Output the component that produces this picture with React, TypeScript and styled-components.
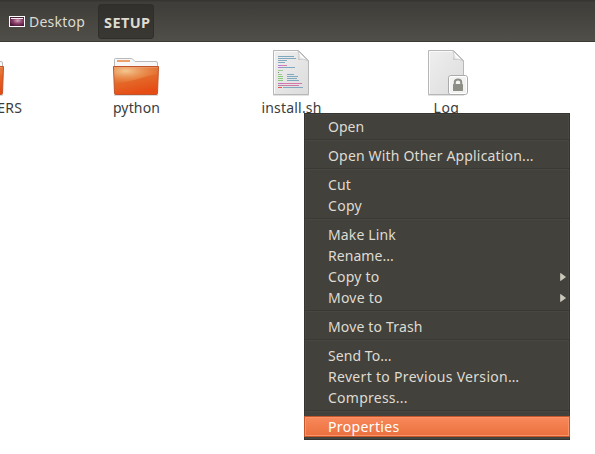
import React from "react";
import styled, { createGlobalStyle, css } from "styled-components";

const GlobalStyle = createGlobalStyle`
  html, body { margin: 0; padding: 0; background: #fff; overflow: hidden; }
  * { box-sizing: border-box; }
`;

const Window = styled.div`
  position: relative;
  width: 595px;
  height: 454px;
  overflow: hidden;
  background: #fff;
  font: 14px/21px "Noto Sans", "Open Sans", sans-serif;
  color: #3c3c3c;
`;

const PathBar = styled.header`
  display: flex;
  align-items: flex-start;
  height: 42px;
  padding: 4px 0 0 9px;
  border-bottom: 1px solid #3b3a36;
  background: linear-gradient(#363531 0, #363531 1px, #3f3e3a 2px, #403f3b 8px, #504f48 41px);
  color: #dfdbd2;
`;

const Crumb = styled.div`
  display: flex;
  align-items: center;
  gap: 4px;
  width: 89px;
  height: 34px;
  letter-spacing: 0.25px;
`;

const ActiveCrumb = styled.div`
  width: 56px;
  height: 35px;
  padding-left: 5px;
  border: 1px solid #2f2e2a;
  border-radius: 3px;
  background: linear-gradient(#31302c, #393833);
  font-size: 14.5px;
  font-weight: 700;
  line-height: 35px;
  letter-spacing: 0.4px;
`;

const Browser = styled.main`
  display: flex;
`;

const Cell = styled.div<{ $width: number; $end?: boolean }>`
  flex: none;
  display: flex;
  flex-direction: column;
  align-items: ${(p) => (p.$end ? "flex-end" : "center")};
  width: ${(p) => p.$width}px;
  padding-top: 6px;
`;

const FolderCrop = styled.div`
  height: 48px;
  margin-right: 17px;

  svg {
    display: block;
  }
`;

const Label = styled.div<{ $spacing?: number }>`
  height: 21px;
  margin-top: 1px;
  padding-left: 1px;
  white-space: nowrap;
  letter-spacing: ${(p) => p.$spacing ?? 0.15}px;
`;

const Menu = styled.nav`
  position: absolute;
  left: 304px;
  top: 113px;
  width: 266px;
  height: 327px;
  padding: 3px 0;
  background: #42413b;
  box-shadow: inset 0 0 0 1px #353430, inset 0 0 0 2px #484741;
  color: #dfdbd2;
`;

const Item = styled.div<{ $spacing: number; $active?: boolean }>`
  display: flex;
  align-items: center;
  justify-content: space-between;
  height: 21px;
  padding: 0 4px 0 24px;
  white-space: nowrap;
  letter-spacing: ${(p) => p.$spacing}px;
  ${(p) =>
    p.$active &&
    css`
      background: linear-gradient(#f98a5d, #ea6f3c);
      box-shadow: inset 0 0 0 1px #c4562b, inset 0 0 0 2px #fa9468;
      color: #fff;
    `}
`;

const Separator = styled.div`
  height: 2px;
  margin: 2px 1px 4px;
  border-top: 1px solid #3a3934;
  border-bottom: 1px solid #484741;
`;

const Arrow = () => (
  <svg width="6" height="8" viewBox="0 0 6 8">
    <path d="M.5.3v7.4L5.6 4z" fill="#c9c8bb" stroke="#e2dfd5" strokeWidth=".5" />
  </svg>
);

const DesktopIcon = () => (
  <svg width="16" height="11" viewBox="0 0 16 11" shapeRendering="crispEdges">
    <defs>
      <radialGradient id="wall" cx=".55" cy=".4" r=".65">
        <stop offset="0" stopColor="#d8a5bb" />
        <stop offset=".5" stopColor="#8b436b" />
        <stop offset="1" stopColor="#4d1539" />
      </radialGradient>
    </defs>
    <rect width="16" height="11" fill="#fff" />
    <rect x="1" y="1" width="14" height="9" fill="url(#wall)" />
    <path d="M1 1h14v1H1z" fill="#47203a" />
    <path d="M2 2h12v1H2z" fill="#f4e9ef" />
  </svg>
);

const FolderIcon = ({ id }: { id: string }) => (
  <svg width="48" height="48" viewBox="0 0 48 48">
    <defs>
      <linearGradient id={id} x1="0" y1="0" x2=".35" y2="1">
        <stop offset="0" stopColor="#dd7038" />
        <stop offset=".55" stopColor="#e36a2a" />
        <stop offset="1" stopColor="#e64d15" />
      </linearGradient>
      <radialGradient id={id + "g"} cx=".27" cy=".25" r=".75">
        <stop offset="0" stopColor="#f6d29c" stopOpacity=".9" />
        <stop offset="1" stopColor="#f0a35f" stopOpacity=".1" />
      </radialGradient>
    </defs>
    <path d="M2 47.500h44" stroke="#999" strokeOpacity=".35" />
    <path
      d="M2.500 20v-8.500q0-1 1-1H19.500q1 0 2 1.500l1.500 1.500H44q1.500 0 1.500 1.500v6z"
      fill="#f7f7f7"
      stroke="#b9b9b9"
    />
    <path d="M5 12h13v2H5z" fill="#eda06c" />
    <path d="M1.500 18.500h45l-1 27q0 1-1 1h-41q-1 0-1-1z" fill={`url(#${id})`} stroke="#c1532a" />
    <path d="M2 19h44l-.4 7C32 28 22 34 2.500 35z" fill={`url(#${id}g)`} />
    <path d="M2.500 19.500h43" stroke="#f0a67b" strokeOpacity=".5" />
  </svg>
);

const Sheet = ({ id }: { id: string }) => (
  <>
    <defs>
      <linearGradient id={id} x1="0" y1="0" x2="1" y2="1">
        <stop offset="0" stopColor="#efefef" />
        <stop offset="1" stopColor="#dcdcdc" />
      </linearGradient>
      <linearGradient id={id + "fold"} x1="0" y1="1" x2=".7" y2=".3">
        <stop offset="0" stopColor="#c4c4c4" />
        <stop offset=".6" stopColor="#fff" />
      </linearGradient>
    </defs>
    <path d="M6 47.300h36" stroke="#888" strokeOpacity=".3" />
    <path d="M6.500 2.500h25l10 10v34h-35z" fill={`url(#${id})`} stroke="#b7b7b7" />
    <path d="M7.500 45.500v-42h23" fill="none" stroke="#fafafa" />
    <path d="M31 3q2 4 .5 8.500Q37 10 41 13z" fill={`url(#${id}fold)`} stroke="#c2c2c2" strokeWidth=".8" />
  </>
);

const CODE: [number, number, number, string][] = [
  [11, 8, 16, "#7fa7bd"], [11, 10, 18, "#7fa7bd"], [11, 12, 9, "#86aabd"], [11, 14, 7, "#86aabd"],
  [11, 17, 3, "#b27fd1"], [14, 17, 6, "#dc79ad"], [11, 19, 4, "#b27fd1"], [15, 19, 13, "#80a8bf"],
  [11, 22, 5, "#9fcb91"], [11, 24, 1, "#888"],
  [11, 26, 4, "#9fcb91"], [20, 26, 7, "#80a8bf"], [11, 28, 5, "#8acb7b"], [20, 28, 11, "#80a8bf"],
  [11, 30, 5, "#8acb7b"], [20, 30, 10, "#80a8bf"], [11, 32, 5, "#8acb7b"], [20, 32, 12, "#80a8bf"],
  [11, 35, 5, "#c76dc0"], [16, 35, 19, "#d878a8"], [11, 37, 5, "#a88a9c"], [16, 37, 16, "#cf7aa6"],
  [11, 39, 4, "#e94e53"], [16, 39, 20, "#80a8bf"],
];

const ScriptIcon = () => (
  <svg width="48" height="48" viewBox="0 0 48 48">
    <Sheet id="sheetScript" />
    {CODE.map(([x, y, w, c], i) => (
      <rect key={i} x={x} y={y} width={w} height="1" fill={c} />
    ))}
  </svg>
);

const LockedIcon = () => (
  <svg width="48" height="48" viewBox="0 0 48 48">
    <Sheet id="sheetLog" />
    <rect x="26.500" y="27.500" width="19" height="19" rx="2.500" fill="#f2f2f2" stroke="#aaa" />
    <rect x="27.500" y="28.500" width="17" height="17" rx="1.500" fill="none" stroke="#fff" />
    <path d="M32.800 37v-3q0-2.600 3.200-2.600t3.200 2.600v3" fill="none" stroke="#8c8d84" strokeWidth="2" />
    <rect x="31" y="36" width="10" height="7" rx=".5" fill="#8c8d84" />
  </svg>
);

type Entry = { text: string; spacing: number; submenu?: boolean; active?: boolean };

const GROUPS: Entry[][] = [
  [{ text: "Open", spacing: 0 }],
  [{ text: "Open With Other Application...", spacing: 0.17 }],
  [{ text: "Cut", spacing: 0.15 }, { text: "Copy", spacing: 0.3 }],
  [
    { text: "Make Link", spacing: 0.15 },
    { text: "Rename...", spacing: 0.05 },
    { text: "Copy to", spacing: 0.22, submenu: true },
    { text: "Move to", spacing: 0.22, submenu: true },
  ],
  [{ text: "Move to Trash", spacing: 0.16 }],
  [
    { text: "Send To...", spacing: 0.06 },
    { text: "Revert to Previous Version…", spacing: 0.31 },
    { text: "Compress...", spacing: 0.25 },
  ],
  [{ text: "Properties", spacing: 0.36, active: true }],
];

export default function App() {
  return (
    <Window>
      <GlobalStyle />
      <PathBar>
        <Crumb>
          <DesktopIcon />
          Desktop
        </Crumb>
        <ActiveCrumb>SETUP</ActiveCrumb>
      </PathBar>
      <Browser>
        <Cell $width={22} $end>
          <FolderCrop>
            <FolderIcon id="folderA" />
          </FolderCrop>
          <Label>ERS</Label>
        </Cell>
        <Cell $width={228}>
          <FolderIcon id="folderB" />
          <Label>python</Label>
        </Cell>
        <Cell $width={82}>
          <ScriptIcon />
          <Label $spacing={0.2}>install.sh</Label>
        </Cell>
        <Cell $width={228}>
          <LockedIcon />
          <Label $spacing={0.45}>Log</Label>
        </Cell>
      </Browser>
      <Menu>
        {GROUPS.map((group, g) => (
          <React.Fragment key={g}>
            {g > 0 && <Separator />}
            {group.map((e) => (
              <Item key={e.text} $spacing={e.spacing} $active={e.active}>
                {e.text}
                {e.submenu && <Arrow />}
              </Item>
            ))}
          </React.Fragment>
        ))}
      </Menu>
    </Window>
  );
}
